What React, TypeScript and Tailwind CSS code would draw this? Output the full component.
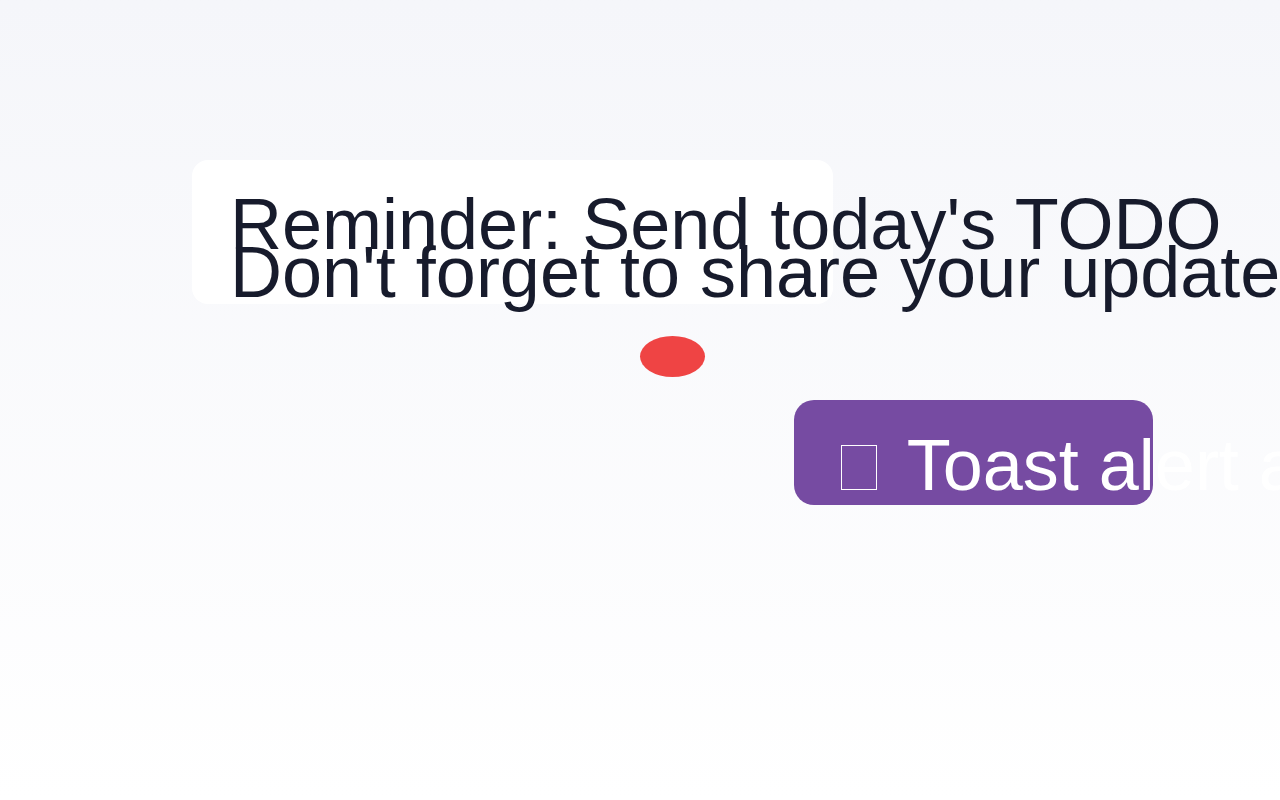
import React from 'react';

export default function App() {
  return (
    <div
      className="h-screen w-full overflow-hidden bg-gradient-to-b from-[#f5f6fa] to-white"
      style={{ fontFamily: '"Liberation Sans", Arial, sans-serif' }}
    >
      <div className="flex flex-col items-start pt-[160px] pl-[192px]">
        {/* Reminder card */}
        <div className="w-[641px] h-[144px] bg-white rounded-2xl pl-[38px] pt-10">
          <div className="whitespace-nowrap text-[72px] leading-[48px] text-[#171b2c]">
            <p>Reminder: Send today's TODO</p>
            <p>Don't forget to share your update with the team</p>
          </div>
        </div>

        {/* Dot */}
        <div className="ml-[448px] mt-8 w-[65px] h-[41px] rounded-[50%] bg-[#ef4444]" />

        {/* Toast */}
        <div className="ml-[602px] mt-[23px] w-[359px] h-[105px] rounded-[20px] bg-[#764ba2] pl-10 pt-[41px]">
          <p className="whitespace-nowrap text-[72px] leading-[48px] text-white">
            <span className="inline-block ml-[7px] mr-[11px] w-[36px] h-[45px] border border-white" /> Toast alert appears here
          </p>
        </div>
      </div>
    </div>
  );
}
